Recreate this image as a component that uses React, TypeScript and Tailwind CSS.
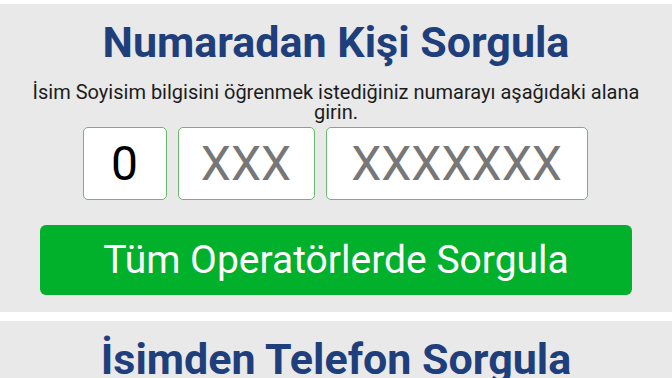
import { useState } from 'react';

const font = { fontFamily: 'Roboto, "Noto Sans", sans-serif' };

function NumberBox({ width, placeholder, value }: { width: string; placeholder: string; value?: string }) {
  return (
    <div
      className={`${width} h-[73px] bg-white border border-[#66bb6a] rounded-[5px] flex items-center justify-center text-[48px] leading-none`}
    >
      {value ? (
        <span className="text-black">{value}</span>
      ) : (
        <span className="text-[#777777]">{placeholder}</span>
      )}
    </div>
  );
}

export default function App() {
  const [operator] = useState('0');

  return (
    <div className="bg-white pt-1 min-h-screen overflow-hidden" style={font}>
      <section className="bg-[#e9e9e9] pt-[14px] pb-[17px] flex flex-col items-center">
        <h1 className="text-[43px] leading-[49px] font-bold text-[#1f3f7c]">Numaradan Kişi Sorgula</h1>
        <p className="mt-[15px] px-6 text-[20px] leading-[20px] text-[#1c1c1c] text-center">
          İsim Soyisim bilgisini öğrenmek istediğiniz numarayı aşağıdaki alana girin.
        </p>
        <div className="mt-[5px] flex gap-[11px] pr-[2px]">
          <NumberBox width="w-[84px]" placeholder="0" value={operator} />
          <NumberBox width="w-[137px]" placeholder="XXX" />
          <NumberBox width="w-[262px]" placeholder="XXXXXXX" />
        </div>
        <button className="mt-[25px] w-[592px] h-[70px] bg-[#01b02b] rounded-[6px] text-white text-[39px] leading-none">
          Tüm Operatörlerde Sorgula
        </button>
      </section>
      <section className="mt-[9px] bg-[#e9e9e9] pt-[14px] pb-[17px] flex flex-col items-center">
        <h2 className="text-[43px] leading-[49px] font-bold text-[#1f3f7c]">İsimden Telefon Sorgula</h2>
      </section>
    </div>
  );
}
